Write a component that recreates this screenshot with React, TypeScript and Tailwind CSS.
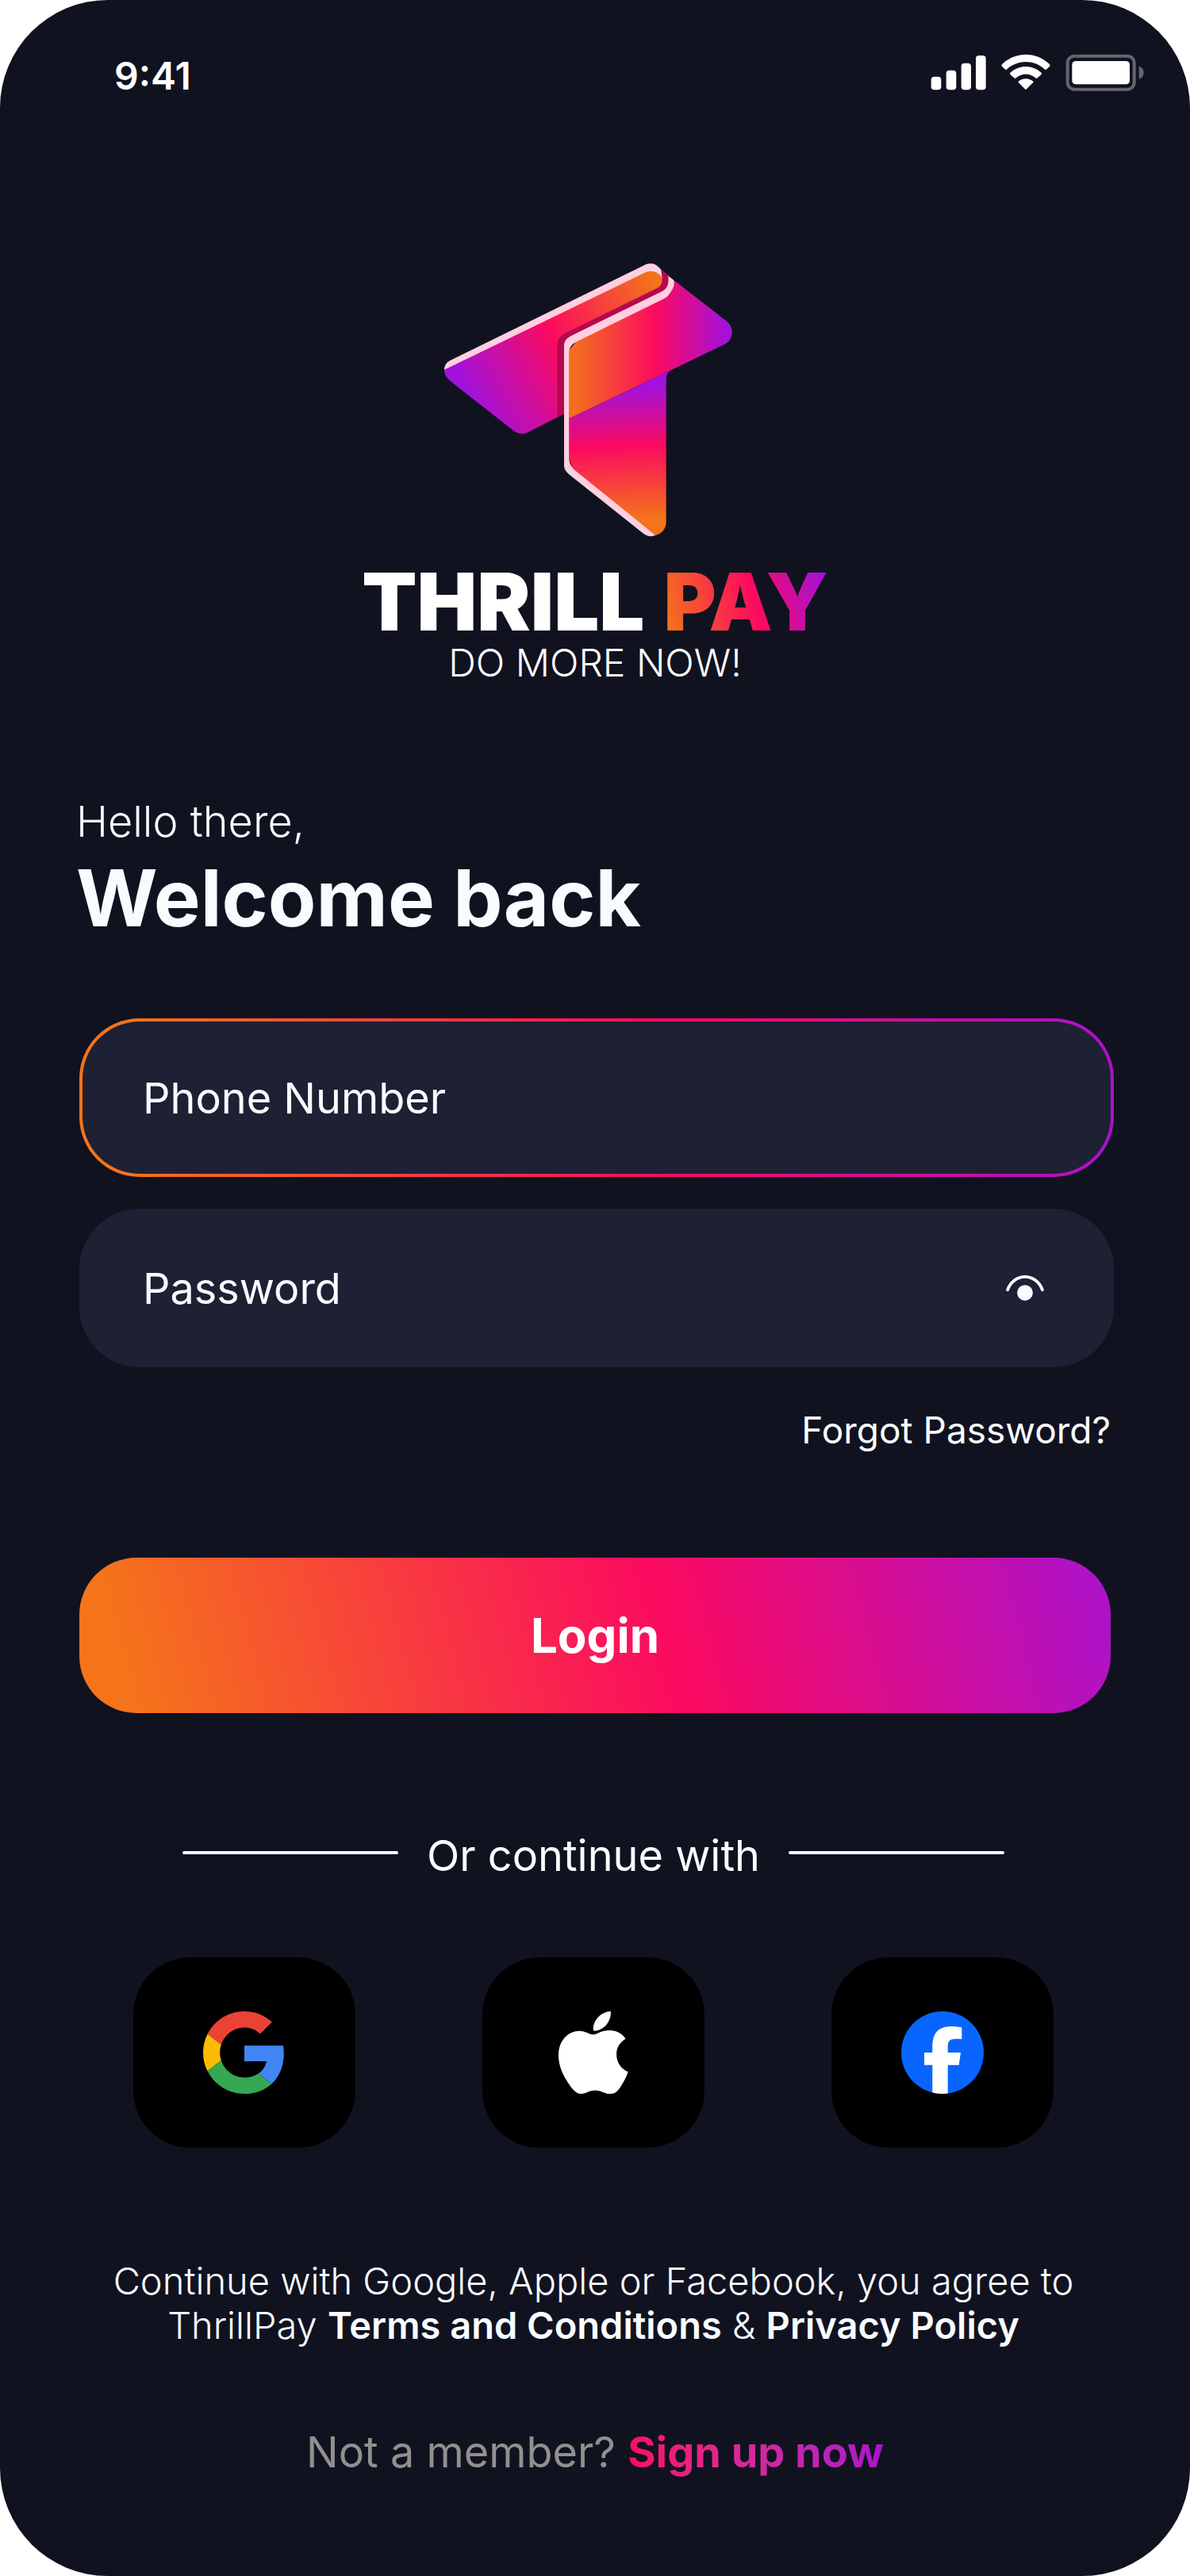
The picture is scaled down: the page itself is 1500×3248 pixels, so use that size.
import React, { useState } from "react";

function StatusIcons() {
  return (
    <svg viewBox="100 55 810 141" className="mt-1 h-[47px] w-[270px]" role="img" aria-label="Signal, Wi-Fi and battery">
      <g fill="#fff">
        <rect x="102" y="141" width="38" height="50" rx="12" />
        <rect x="159" y="117" width="38" height="74" rx="12" />
        <rect x="216" y="90" width="37" height="101" rx="12" />
        <rect x="271" y="61" width="38" height="130" rx="12" />
        <path d="M370 94C421 45 499 45 550 94Q553 98 550 102L539 113Q535 117 531 113C491 76 429 76 389 113Q385 117 381 113L370 102Q367 98 370 94Z" />
        <path d="M401 126C435 95 485 95 519 126Q521 129 519 132L504 146Q501 149 497 146C475 127 445 127 423 146Q419 149 416 146L401 132Q399 129 401 126Z" />
        <path d="M433 158C449 146 471 146 487 158Q490 161 487 164L463 188Q460 191 457 188L433 164Q430 161 433 158Z" />
        <rect x="635" y="82" width="218" height="88" rx="14" />
      </g>
      <rect x="618" y="63" width="252" height="126" rx="26" fill="none" stroke="#646570" strokeWidth="12" />
      <path d="M888 101Q906 109 906 126T888 151Z" fill="#646570" />
    </svg>
  );
}

function LogoMark() {
  return (
    <svg viewBox="118 65 1143 1035" className="h-[345px] w-[381px]" role="img" aria-label="Thrill Pay logo">
      <defs>
        <linearGradient id="back" gradientUnits="userSpaceOnUse" x1="170" y1="490" x2="900" y2="110">
          <stop offset="0" stopColor="#a112dd" />
          <stop offset="0.47" stopColor="#fb0a60" />
          <stop offset="1" stopColor="#f3741a" />
        </linearGradient>
        <linearGradient id="front" gradientUnits="userSpaceOnUse" x1="605" y1="0" x2="1195" y2="0">
          <stop offset="0" stopColor="#f3701c" />
          <stop offset="0.53" stopColor="#fb0a60" />
          <stop offset="1" stopColor="#a112dd" />
        </linearGradient>
        <linearGradient id="stem" gradientUnits="userSpaceOnUse" x1="770" y1="530" x2="785" y2="1035">
          <stop offset="0" stopColor="#a112dd" />
          <stop offset="0.45" stopColor="#fb0a60" />
          <stop offset="1" stopColor="#f3741a" />
        </linearGradient>
      </defs>
      <path d="M118 466L500 270L875 95C905 82 935 94 944 122L944 170L580 350V630L435 704Q408 717 383 700L140 510Q118 492 118 466Z" fill="url(#back)" />
      <path d="M118 468C118 450 127 438 145 430L872 73C893 62 912 65 925 76L938 88L943 122C930 98 902 88 875 101Z" fill="#ffcfdf" />
      <path d="M545 647V375C545 355 555 340 575 330L920 160C938 151 942 143 942 122V102L938 88L966 110L975 150L940 185L600 350V620Z" fill="#b5084f" />
      <path d="M590 652V395L625 350L945 195L985 128L1187 285C1215 308 1212 355 1180 370L975 469Z" fill="url(#front)" />
      <path d="M590 652L975 469C960 479 957 490 957 505V1046C956 1070 940 1088 917 1094L605 850L590 800Z" fill="url(#stem)" />
      <path d="M571 378C571 357 583 346 602 337L938 173C960 162 968 150 965 112L985 128C991 145 984 160 972 177C963 191 956 196 945 201L625 358C600 370 590 380 590 405V800C591 825 600 838 615 850L917 1094C900 1100 885 1098 872 1088L592 865C576 852 571 842 571 828Z" fill="#ffcfdf" />
    </svg>
  );
}

function GoogleIcon() {
  return (
    <svg viewBox="0 0 48 48" className="size-[104px]" aria-hidden="true">
      <path fill="#ea4335" d="M24 9.5c3.54 0 6.71 1.22 9.21 3.6l6.85-6.85C35.9 2.38 30.47 0 24 0 14.62 0 6.51 5.38 2.56 13.22l7.98 6.19C12.43 13.72 17.74 9.5 24 9.5z" />
      <path fill="#4285f4" d="M46.98 24.55c0-1.57-.15-3.09-.38-4.55H24v9.02h12.94c-.58 2.96-2.26 5.48-4.78 7.18l7.73 6c4.51-4.18 7.09-10.36 7.09-17.65z" />
      <path fill="#fbbc05" d="M10.53 28.59c-.48-1.45-.76-2.99-.76-4.59s.27-3.14.76-4.59l-7.98-6.19C.92 16.46 0 20.12 0 24c0 3.88.92 7.54 2.56 10.78l7.97-6.19z" />
      <path fill="#34a853" d="M24 48c6.48 0 11.93-2.13 15.89-5.81l-7.73-6c-2.15 1.45-4.92 2.3-8.16 2.3-6.26 0-11.57-4.22-13.47-9.91l-7.98 6.19C6.51 42.62 14.62 48 24 48z" />
    </svg>
  );
}

function AppleIcon() {
  return (
    <svg viewBox="0 0 88 104" className="h-[104px] w-[88px]" fill="#fff" aria-hidden="true">
      <path d="M65.7 0C66.5 6 64 13 60 17.5C56 22 50 25 44 24.5C43 18 46 11.5 50 7.5C54 3 60 .3 65.7 0Z" />
      <path d="M44.3 29.3C48 29.3 54 24 64 24C70 24 79 26 84.6 34.7C77 39 73.1 46 73.1 54C73.1 64 78.5 72.5 87.6 76.3C86 82 82 90 77 97C72.5 103.5 69 104 65 104C58 104 54 99.7 45.8 99.7C38 99.7 35 104 28 104C23 104 18 99 14 93C5 80 0 68 0 55.7C0 36 13 24.7 26.4 24.7C34 24.7 39 29.3 44.3 29.3Z" />
    </svg>
  );
}

function FacebookIcon() {
  return (
    <svg viewBox="0 0 104 104" className="size-[104px]" aria-hidden="true">
      <clipPath id="disc">
        <circle cx="52" cy="52" r="52" />
      </clipPath>
      <g clipPath="url(#disc)">
        <rect width="104" height="104" fill="#0866ff" />
        <path fill="#fff" d="M39.3 104V67.7H29V52H39.3V45C39.3 27 47 19 64 19C67.5 19 73 19.6 76.3 20.3V35C74.5 34.8 72 34.7 69 34.7C61 34.7 58.7 37.5 58.7 45V52H75L72.7 67.7H58.7V104Z" />
      </g>
    </svg>
  );
}

const providers = [
  { name: "Google", Icon: GoogleIcon },
  { name: "Apple", Icon: AppleIcon },
  { name: "Facebook", Icon: FacebookIcon },
];

export default function App() {
  const [visible, setVisible] = useState(false);

  return (
    <div className="bg-white font-['Inter',sans-serif]">
      <div className="flex w-full flex-col rounded-[136px] bg-[#111220] pb-[124px] text-[#f8fcff]">
        <header className="flex items-start justify-between pt-16 pr-[57px] pl-[144px] text-white">
          <span className="text-[48px] leading-[64px] font-semibold">9:41</span>
          <StatusIcons />
        </header>

        <div className="mt-[204px] flex flex-col items-center text-white">
          <LogoMark />
          <div className="mt-[27px] flex gap-6 text-[101px] leading-[108px] font-black whitespace-nowrap">
            <span>THRILL</span>
            <span className="bg-[linear-gradient(75deg,#f3741a_4%,#fb0a60_55%,#a112dd_96%)] bg-clip-text text-transparent">PAY</span>
          </div>
          <p className="text-[48px] leading-[48px] font-light">DO MORE NOW!</p>
        </div>

        <main className="flex flex-col pr-24 pl-[100px]">
          <div className="-ml-1 flex flex-col gap-1 pt-36">
            <p className="text-[54px] leading-[64px] font-light">Hello there,</p>
            <h1 className="text-[99px] leading-[120px] font-bold">Welcome back</h1>
          </div>

          <form className="mt-[92px] flex flex-col" onSubmit={(e) => e.preventDefault()}>
            <div className="rounded-[76px] bg-[linear-gradient(90deg,#f5741a_4%,#fb0a60_57%,#ab12cc_100%)] p-1">
              <input
                type="tel"
                aria-label="Phone Number"
                placeholder="Phone Number"
                className="block h-48 w-full rounded-[72px] bg-[#1e2034] px-[76px] text-[54px] outline-none placeholder:text-[#f8fcff]"
              />
            </div>
            <div className="mt-10 flex h-[200px] items-center rounded-[76px] bg-[#1e2034] pr-[88px] pl-20">
              <input
                type={visible ? "text" : "password"}
                aria-label="Password"
                placeholder="Password"
                className="h-full min-w-0 flex-1 bg-transparent text-[54px] outline-none placeholder:text-[#f8fcff]"
              />
              <button type="button" aria-label="Show password" onClick={() => setVisible(!visible)}>
                <svg viewBox="962 883 125 84" className="h-8 w-12" aria-hidden="true">
                  <path d="M967 931C977 903 1000 888 1024.5 888S1072 903 1082 931" fill="none" stroke="#f8fcff" strokeWidth="10" strokeLinecap="round" />
                  <circle cx="1024.5" cy="941" r="26" fill="#f8fcff" />
                </svg>
              </button>
            </div>
            <a href="#forgot" className="mt-[51px] mr-1 self-end text-[46px] leading-[56px]">Forgot Password?</a>
            <button
              type="submit"
              className="mt-[133px] mr-1 h-[196px] rounded-[72px] bg-[linear-gradient(75deg,#f5741a_5%,#fb0a60_57%,#ab12cc_100%)] text-[60px] font-bold text-white"
            >
              Login
            </button>
          </form>

          <div className="mt-[148px] mr-2 flex items-center justify-center gap-9">
            <span className="mb-2 h-1 w-[272px] rounded-full bg-[#f8fcff]" />
            <span className="text-[54px] leading-[64px]">Or continue with</span>
            <span className="mb-2 h-1 w-[272px] rounded-full bg-[#f8fcff]" />
          </div>

          <div className="mt-24 mr-2 flex justify-center gap-40">
            {providers.map(({ name, Icon }) => (
              <button
                key={name}
                type="button"
                aria-label={`Continue with ${name}`}
                className="flex h-60 w-[280px] items-center justify-center rounded-[72px] bg-black"
              >
                <Icon />
              </button>
            ))}
          </div>

          <p className="mt-[140px] mr-2 text-center text-[47px] leading-[56px] font-light">
            Continue with Google, Apple or Facebook, you agree to
            <br />
            ThrillPay <a href="#terms" className="font-semibold">Terms and Conditions</a> &amp;{" "}
            <a href="#privacy" className="font-semibold">Privacy Policy</a>
          </p>

          <p className="mt-[100px] mr-1 text-center text-[54px] leading-[64px] text-[#90908f]">
            Not a member?{" "}
            <a href="#signup" className="bg-linear-to-r from-[#fb0a60] to-[#ab12cc] bg-clip-text font-bold text-transparent">
              Sign up now
            </a>
          </p>
        </main>
      </div>
    </div>
  );
}
